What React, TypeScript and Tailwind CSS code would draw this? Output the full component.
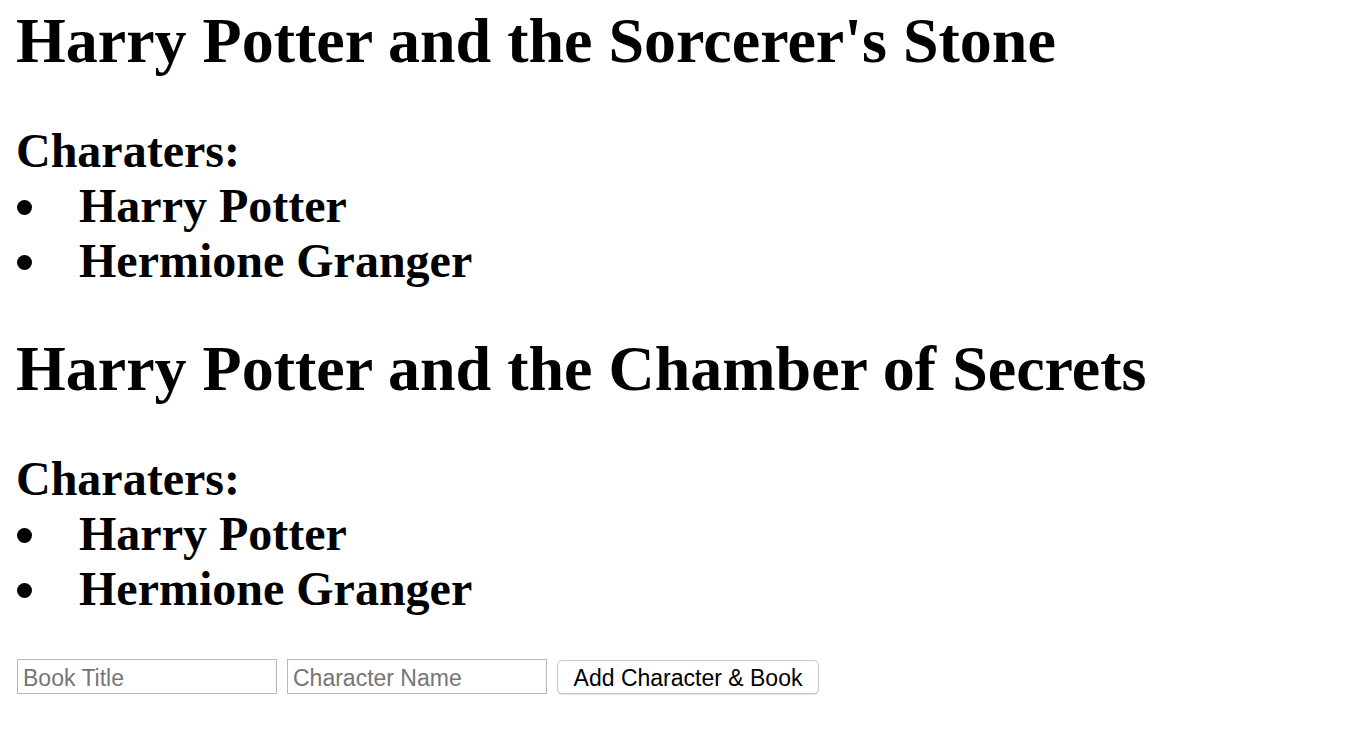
import { useState } from 'react';

type Book = {
  title: string;
  characters: string[];
};

const initialBooks: Book[] = [
  {
    title: "Harry Potter and the Sorcerer's Stone",
    characters: ['Harry Potter', 'Hermione Granger'],
  },
  {
    title: 'Harry Potter and the Chamber of Secrets',
    characters: ['Harry Potter', 'Hermione Granger'],
  },
];

function BookEntry({ book, first }: { book: Book; first: boolean }) {
  return (
    <section className={first ? '' : 'mt-[44px]'}>
      <h1 className="text-[64px] font-bold leading-[74px]">{book.title}</h1>
      <h2 className="mt-[45px] text-[48px] font-bold leading-[55px]">Charaters:</h2>
      <ul>
        {book.characters.map((name, i) => (
          <li key={i} className="flex text-[48px] font-bold leading-[55px]">
            <span className="mt-[22px] ml-[1px] h-[15px] w-[15px] shrink-0 rounded-full bg-black" />
            <span className="ml-[47px]">{name}</span>
          </li>
        ))}
      </ul>
    </section>
  );
}

export default function App() {
  const [books, setBooks] = useState<Book[]>(initialBooks);

  function submitHandler(event: React.FormEvent<HTMLFormElement>) {
    event.preventDefault();
    const form = event.currentTarget;
    const formData = new FormData(form);
    const title = (formData.get('title') as string).trim();
    const name = (formData.get('name') as string).trim();
    if (!title || !name) {
      return;
    }
    setBooks((prev) => [...prev, { title, characters: [name] }]);
    form.reset();
  }

  return (
    <div className="min-h-screen bg-white px-[16px] pt-[4px] pb-[40px] text-black [font-family:'Liberation_Serif','Times_New_Roman',serif]">
      {books.map((book, i) => (
        <BookEntry key={i} book={book} first={i === 0} />
      ))}
      <form
        onSubmit={submitHandler}
        className="mt-[43px] ml-[1px] flex items-start gap-[10px] [font-family:'Liberation_Sans',Arial,sans-serif]"
      >
        <input
          type="text"
          name="title"
          placeholder="Book Title"
          className="h-[35px] w-[260px] border border-[#b9b9b9] bg-white px-[5px] pt-[3px] text-[23px] text-black outline-none placeholder:text-[#767676]"
        />
        <input
          type="text"
          name="name"
          placeholder="Character Name"
          className="h-[35px] w-[260px] border border-[#b9b9b9] bg-white px-[5px] pt-[3px] text-[23px] text-black outline-none placeholder:text-[#767676]"
        />
        <button
          type="submit"
          className="mt-[1px] h-[34px] w-[262px] rounded-[5px] border border-[#c8c8c8] bg-white pt-[2px] text-[23px] leading-none text-black shadow-[0_1px_1px_rgba(0,0,0,0.12)]"
        >
          Add Character &amp; Book
        </button>
      </form>
    </div>
  );
}
